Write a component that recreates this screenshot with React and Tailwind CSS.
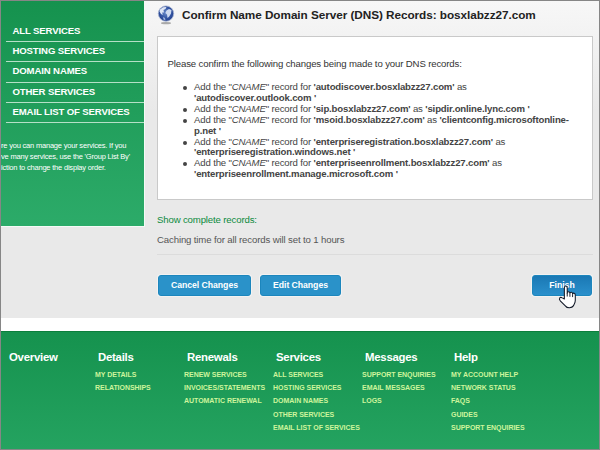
import React from "react";

const NAV = ["ALL SERVICES", "HOSTING SERVICES", "DOMAIN NAMES", "OTHER SERVICES", "EMAIL LIST OF SERVICES"];

const RECORDS = [
  ["autodiscover.bosxlabzz27.com", "autodiscover.outlook.com", true],
  ["sip.bosxlabzz27.com", "sipdir.online.lync.com", false],
  ["msoid.bosxlabzz27.com", "clientconfig.microsoftonline-p.net", false],
  ["enterpriseregistration.bosxlabzz27.com", "enterpriseregistration.windows.net", true],
  ["enterpriseenrollment.bosxlabzz27.com", "enterpriseenrollment.manage.microsoft.com", true],
];

const FOOTER = [
  ["Overview", []],
  ["Details", ["MY DETAILS", "RELATIONSHIPS"]],
  ["Renewals", ["RENEW SERVICES", "INVOICES/STATEMENTS", "AUTOMATIC RENEWAL"]],
  ["Services", ["ALL SERVICES", "HOSTING SERVICES", "DOMAIN NAMES", "OTHER SERVICES", "EMAIL LIST OF SERVICES"]],
  ["Messages", ["SUPPORT ENQUIRIES", "EMAIL MESSAGES", "LOGS"]],
  ["Help", ["MY ACCOUNT HELP", "NETWORK STATUS", "FAQS", "GUIDES", "SUPPORT ENQUIRIES"]],
];

function Globe() {
  return (
    <svg className="mt-px h-[20px] w-[18px] shrink-0" viewBox="0 0 18 20">
      <defs>
        <radialGradient id="globe" cx="50%" cy="45%" r="55%">
          <stop offset="0" stopColor="#6f8fcb" />
          <stop offset="0.6" stopColor="#3556a4" />
          <stop offset="1" stopColor="#24408c" />
        </radialGradient>
      </defs>
      <ellipse cx="9" cy="18.2" rx="5" ry="1.1" fill="#a9a9a9" />
      <circle cx="9" cy="8.6" r="7.7" fill="url(#globe)" stroke="#a9b6d3" strokeWidth="0.8" />
      <path d="M3 4.5L6 2.2L9.5 2L8.5 4L6.5 5L7 7.5L5.2 7.5L5.8 10L4 9L2.5 6.5Z" fill="#dfe7f6" />
      <path d="M9.5 5.5L12 4L14.5 5L14 8.5L12.2 11.5L10.5 13L10 9.5L8.4 8Z" fill="#cfdaf0" />
      <path d="M6 12L8 13L8.5 15.5L6.5 14.5Z" fill="#9eb3dc" />
    </svg>
  );
}

function Hand() {
  return (
    <svg className="absolute left-[25px] top-[9px] h-[24px] w-[20px]" viewBox="0 0 20 25">
      <path
        d="M6.2 14.5V3C6.2 .5 9.2 .5 9.2 3V8.5C9.2 6.6 12 6.6 12 8.7C12.3 7 14.8 7.2 14.8 9.3C15.2 8 17.6 8.3 17.6 10.4V16C17.6 19 16.3 19.6 15.8 21.5C14 24.3 9 24.3 7.5 22L2.2 16.7C-.3 14 1.8 12 4 13.4Z"
        fill="#fff"
        stroke="#111827"
        strokeWidth="1.1"
        strokeLinejoin="round"
      />
      <path d="M9.2 8.5V12M12 9V12.3M14.8 9.6V12.6" stroke="#111827" strokeWidth="1" fill="none" />
    </svg>
  );
}

const BUTTON =
  "flex h-[21px] items-center justify-center rounded-[3px] border border-[#1c86bd] bg-[#2a92c9] text-[8.7px] tracking-[-0.05px] font-bold text-white shadow-[0_0_0_1px_#f2f2f2]";

export default function App() {
  return (
    <div className="flex h-[450px] w-[600px] flex-col overflow-hidden border border-[#868686] bg-white font-['Liberation_Sans',Arial,sans-serif] whitespace-nowrap">
      <div className="flex h-[317px] shrink-0 bg-[#e9e9e9] bg-[linear-gradient(#f7f7f7,#e9e9e9_110px)]">
        <aside className="h-[226px] w-[144px] shrink-0 overflow-hidden border-r border-b border-[#f4faf6] bg-linear-to-b from-[#15924e] to-[#2cab69] pt-[21px]">
          <ul className="ml-[5px]">
            {NAV.map((n) => (
              <li key={n} className="h-[20.2px] border-b border-[#b5e0c7] pl-[6.5px] text-[9.6px] leading-[18px] font-bold tracking-[-0.14px] text-white">
                {n}
              </li>
            ))}
          </ul>
          <div className="mt-[18.5px] text-[7.5px] leading-[10.9px] tracking-[-0.2px] text-white">
            <p>re you can manage your services. If you</p>
            <p>ve many services, use the 'Group List By'</p>
            <p>iction to change the display order.</p>
          </div>
        </aside>
        <main className="ml-[12px] w-[436px] pt-[3px]">
          <header className="flex h-[32px] items-start">
            <Globe />
            <h1 className="ml-[7px] text-[11.75px] leading-[21px] font-bold tracking-[-0.05px] text-[#222]">
              Confirm Name Domain Server (DNS) Records: bosxlabzz27.com
            </h1>
          </header>
          <section className="h-[164px] border border-[#c9c9c9] bg-white pt-[21px] pl-[9.5px] text-[9.6px] text-[#444]">
            <p className="leading-[12px] tracking-[-0.135px] text-[#333]">Please confirm the following changes being made to your DNS records:</p>
            <ul className="mt-[12px] pl-[26.5px] leading-[10.9px] tracking-[-0.15px]">
              {RECORDS.map(([host, target, wrap]) => (
                <li key={host} className="relative">
                  <span className="absolute top-[4px] left-[-11px] h-[4px] w-[4px] rounded-full bg-[#444]" />
                  Add the "<i>CNAME</i>" record for <b>'{host}'</b> as {wrap && <br />}
                  {target.includes("-p.net") ? (
                    <b>
                      'clientconfig.microsoftonline-
                      <br />
                      p.net '
                    </b>
                  ) : (
                    <b>'{target} '</b>
                  )}
                </li>
              ))}
            </ul>
          </section>
          <p className="mt-[14px] text-[9.6px] leading-[12px] tracking-[-0.14px] text-[#0b8a3c]">Show complete records:</p>
          <p className="mt-[8px] text-[9.6px] leading-[12px] tracking-[-0.13px] text-[#555]">Caching time for all records will set to 1 hours</p>
          <hr className="mt-[8px] border-t border-[#dcdcdc]" />
          <div className="mt-[20px] flex gap-[9px] pl-[1px]">
            <button className={BUTTON + " w-[93px]"}>Cancel Changes</button>
            <button className={BUTTON + " w-[81px]"}>Edit Changes</button>
            <button className={BUTTON + " relative mr-[1px] ml-auto w-[60px] bg-linear-to-b from-[#1a78b4] to-[#2a90cc]"}>
              Finish
              <Hand />
            </button>
          </div>
        </main>
      </div>
      <footer className="mt-[13px] flex h-[118px] shrink-0 border-t border-[#0b7f3c] bg-linear-to-b from-[#15924e] to-[#24a360] pt-[18px] pl-[5px]">
        {FOOTER.map(([title, links]) => (
          <div key={title} className="w-[89px] shrink-0">
            <h2 className="pl-[3px] text-[11.4px] leading-[14px] font-bold tracking-[-0.25px] text-white">{title}</h2>
            <ul className="mt-[4px] text-[7px] leading-[13.2px] font-bold tracking-[-0.04px] text-[#cdf59c]">
              {links.map((l) => (
                <li key={l}>{l}</li>
              ))}
            </ul>
          </div>
        ))}
      </footer>
    </div>
  );
}
